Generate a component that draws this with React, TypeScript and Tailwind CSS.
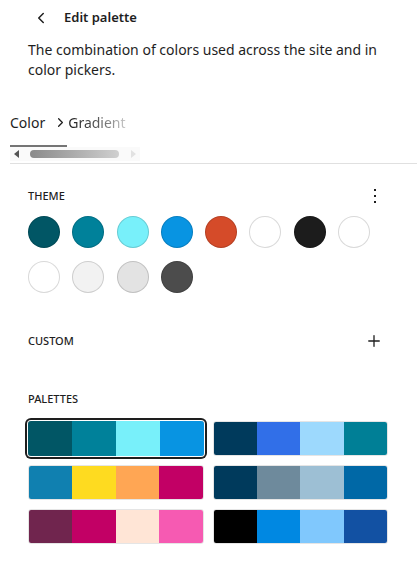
import { ChevronLeft, ChevronRight, Plus } from "lucide-react";

const theme = [
  "#015665",
  "#00819a",
  "#78f0fa",
  "#0894e2",
  "#d54b29",
  "#ffffff",
  "#1c1c1c",
  "#ffffff",
  "#ffffff",
  "#f2f2f2",
  "#e3e3e3",
  "#4c4c4c",
];

const palettes = [
  ["#015665", "#00819a", "#78f0fa", "#0894e2"],
  ["#003a5c", "#316fe8", "#9dd9fd", "#007f96"],
  ["#1080b0", "#fedb20", "#ffa654", "#c20065"],
  ["#003a5c", "#6e8a9c", "#9dbfd4", "#0068a6"],
  ["#70254e", "#c20065", "#ffe5d6", "#f65ab2"],
  ["#000000", "#0088e2", "#80c8fd", "#1251a3"],
];

const App = () => {
  return (
    <div className="w-[417px] min-h-[577px] bg-white text-[#1e1e1e] font-['Noto_Sans','Open_Sans',sans-serif]">
      <div className="flex items-center gap-[14px] pl-[32px] pt-[2px] h-[34px]">
        <ChevronLeft className="w-[18px] h-[18px]" strokeWidth={2} />
        <span className="text-[13px] font-semibold">Edit palette</span>
      </div>

      <p className="pl-[28px] pr-[26px] pt-[6px] text-[14px] leading-[20px] text-[#1e1e1e]">
        The combination of colors used across the site and in color pickers.
      </p>

      <div className="mt-[30px] pl-[10px]">
        <div className="flex items-center h-[24px] text-[14px]">
          <span className="pr-[8px]">Color</span>
          <ChevronRight className="w-[15px] h-[15px] text-[#1e1e1e]" strokeWidth={2} />
          <span className="bg-gradient-to-r from-[#1e1e1e] via-[#555] to-[#ccc] bg-clip-text text-transparent">
            Gradient
          </span>
        </div>
        <div className="mt-[11px] w-[57px] h-[2px] bg-[#757575]" />
        <div className="flex items-center w-[130px] h-[14px] bg-[#fafafa] px-[4px]">
          <span className="w-0 h-0 border-y-[4px] border-y-transparent border-r-[5px] border-r-[#555]" />
          <span className="ml-[11px] w-[90px] h-[8px] rounded-full bg-gradient-to-r from-[#8a8a8a] to-[#d0d0d0]" />
          <span className="ml-[12px] w-0 h-0 border-y-[4px] border-y-transparent border-l-[5px] border-l-[#e2e2e2]" />
        </div>
        <div className="mt-[2px] h-px bg-[#e0e0e0]" />
      </div>

      <div className="px-[28px]">
        <div className="flex items-center justify-between mt-[24px] h-[16px]">
          <span className="text-[11px] font-medium uppercase">Theme</span>
          <div className="flex flex-col gap-[4px] mr-[13px]">
            <span className="w-[2px] h-[2px] bg-[#1e1e1e]" />
            <span className="w-[2px] h-[2px] bg-[#1e1e1e]" />
            <span className="w-[2px] h-[2px] bg-[#1e1e1e]" />
          </div>
        </div>

        <div className="mt-[12px] flex flex-wrap gap-x-[12.3px] gap-y-[13px] w-[360px]">
          {theme.map((c, i) => (
            <span
              key={i}
              className="w-[32px] h-[32px] rounded-full border border-black/15"
              style={{ backgroundColor: c }}
            />
          ))}
        </div>

        <div className="flex items-center justify-between mt-[40px] h-[16px]">
          <span className="text-[11px] font-medium uppercase">Custom</span>
          <Plus className="w-[18px] h-[18px] mr-[6px]" strokeWidth={1.75} />
        </div>

        <div className="mt-[42px] h-[16px] flex items-center">
          <span className="text-[11px] font-medium uppercase">Palettes</span>
        </div>

        <div className="mt-[14px] grid grid-cols-2 gap-x-[9px] gap-y-[9px] w-[360px]">
          {palettes.map((p, i) => (
            <div
              key={i}
              className={
                i === 0
                  ? "flex h-[35px] rounded-[3px] overflow-hidden ring-2 ring-[#1e1e1e] ring-offset-1"
                  : "flex h-[35px] rounded-[3px] overflow-hidden border border-black/10"
              }
            >
              {p.map((c, j) => (
                <span key={j} className="flex-1" style={{ backgroundColor: c }} />
              ))}
            </div>
          ))}
        </div>
      </div>
    </div>
  );
};

export default App;
